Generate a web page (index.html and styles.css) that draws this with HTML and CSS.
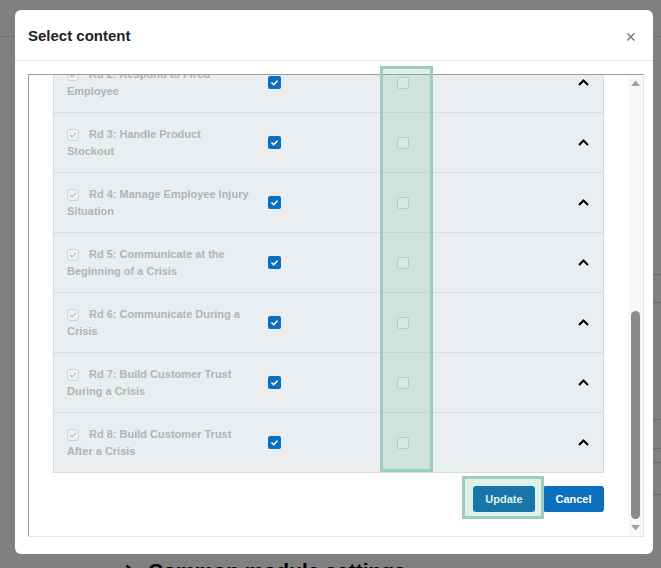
FILE: index.html
```html
<!DOCTYPE html>
<html lang="en">
<head>
  <meta charset="UTF-8">
  <meta name="viewport" content="width=device-width, initial-scale=1.0">
  <title>Select content</title>
  <link rel="stylesheet" href="styles.css">
</head>
<body>
  <div class="page">
    <div class="page-head"></div>
    <div class="page-main">
      <div class="page-content">
        <h2 class="section-title">
          <svg class="section-arrow" width="9" height="13" viewBox="0 0 9 13"><polyline points="1.5,1.5 7,6.5 1.5,11.5" fill="none" stroke="#000" stroke-width="2.4"/></svg>
          Common module settings
        </h2>
      </div>
      <div class="page-side">
        <div class="side-block side-a"></div>
        <div class="side-block side-b"></div>
        <div class="side-block side-c"></div>
      </div>
    </div>
  </div>

  <div class="modal">
    <div class="modal-header">
      <h3 class="modal-title">Select content</h3>
      <span class="modal-close">&times;</span>
    </div>
    <div class="modal-body">
      <div class="frame">
        <div class="frame-view">
          <div class="rounds">
            <div class="round">
              <div class="round-title"><span class="box box-disabled"><svg width="10" height="10" viewBox="0 0 10 10"><polyline points="2,5 4,7 8,3" fill="none" stroke="#bdbdbd" stroke-width="1.2"/></svg></span>Rd 2: Respond to Fired Employee</div>
              <span class="box box-on"><svg width="11" height="11" viewBox="0 0 11 11"><polyline points="2.5,5.5 4.7,7.7 8.5,3.8" fill="none" stroke="#fff" stroke-width="1.6"/></svg></span>
              <span class="box box-off"></span>
              <svg class="chevron" width="11" height="7" viewBox="0 0 11 7"><polyline points="1,6 5.5,1.5 10,6" fill="none" stroke="#000" stroke-width="2"/></svg>
            </div>
            <div class="round">
              <div class="round-title"><span class="box box-disabled"><svg width="10" height="10" viewBox="0 0 10 10"><polyline points="2,5 4,7 8,3" fill="none" stroke="#bdbdbd" stroke-width="1.2"/></svg></span>Rd 3: Handle Product Stockout</div>
              <span class="box box-on"><svg width="11" height="11" viewBox="0 0 11 11"><polyline points="2.5,5.5 4.7,7.7 8.5,3.8" fill="none" stroke="#fff" stroke-width="1.6"/></svg></span>
              <span class="box box-off"></span>
              <svg class="chevron" width="11" height="7" viewBox="0 0 11 7"><polyline points="1,6 5.5,1.5 10,6" fill="none" stroke="#000" stroke-width="2"/></svg>
            </div>
            <div class="round">
              <div class="round-title"><span class="box box-disabled"><svg width="10" height="10" viewBox="0 0 10 10"><polyline points="2,5 4,7 8,3" fill="none" stroke="#bdbdbd" stroke-width="1.2"/></svg></span>Rd 4: Manage Employee Injury Situation</div>
              <span class="box box-on"><svg width="11" height="11" viewBox="0 0 11 11"><polyline points="2.5,5.5 4.7,7.7 8.5,3.8" fill="none" stroke="#fff" stroke-width="1.6"/></svg></span>
              <span class="box box-off"></span>
              <svg class="chevron" width="11" height="7" viewBox="0 0 11 7"><polyline points="1,6 5.5,1.5 10,6" fill="none" stroke="#000" stroke-width="2"/></svg>
            </div>
            <div class="round">
              <div class="round-title"><span class="box box-disabled"><svg width="10" height="10" viewBox="0 0 10 10"><polyline points="2,5 4,7 8,3" fill="none" stroke="#bdbdbd" stroke-width="1.2"/></svg></span>Rd 5: Communicate at the Beginning of a Crisis</div>
              <span class="box box-on"><svg width="11" height="11" viewBox="0 0 11 11"><polyline points="2.5,5.5 4.7,7.7 8.5,3.8" fill="none" stroke="#fff" stroke-width="1.6"/></svg></span>
              <span class="box box-off"></span>
              <svg class="chevron" width="11" height="7" viewBox="0 0 11 7"><polyline points="1,6 5.5,1.5 10,6" fill="none" stroke="#000" stroke-width="2"/></svg>
            </div>
            <div class="round">
              <div class="round-title"><span class="box box-disabled"><svg width="10" height="10" viewBox="0 0 10 10"><polyline points="2,5 4,7 8,3" fill="none" stroke="#bdbdbd" stroke-width="1.2"/></svg></span>Rd 6: Communicate During a Crisis</div>
              <span class="box box-on"><svg width="11" height="11" viewBox="0 0 11 11"><polyline points="2.5,5.5 4.7,7.7 8.5,3.8" fill="none" stroke="#fff" stroke-width="1.6"/></svg></span>
              <span class="box box-off"></span>
              <svg class="chevron" width="11" height="7" viewBox="0 0 11 7"><polyline points="1,6 5.5,1.5 10,6" fill="none" stroke="#000" stroke-width="2"/></svg>
            </div>
            <div class="round">
              <div class="round-title"><span class="box box-disabled"><svg width="10" height="10" viewBox="0 0 10 10"><polyline points="2,5 4,7 8,3" fill="none" stroke="#bdbdbd" stroke-width="1.2"/></svg></span>Rd 7: Build Customer Trust During a Crisis</div>
              <span class="box box-on"><svg width="11" height="11" viewBox="0 0 11 11"><polyline points="2.5,5.5 4.7,7.7 8.5,3.8" fill="none" stroke="#fff" stroke-width="1.6"/></svg></span>
              <span class="box box-off"></span>
              <svg class="chevron" width="11" height="7" viewBox="0 0 11 7"><polyline points="1,6 5.5,1.5 10,6" fill="none" stroke="#000" stroke-width="2"/></svg>
            </div>
            <div class="round">
              <div class="round-title"><span class="box box-disabled"><svg width="10" height="10" viewBox="0 0 10 10"><polyline points="2,5 4,7 8,3" fill="none" stroke="#bdbdbd" stroke-width="1.2"/></svg></span>Rd 8: Build Customer Trust After a Crisis</div>
              <span class="box box-on"><svg width="11" height="11" viewBox="0 0 11 11"><polyline points="2.5,5.5 4.7,7.7 8.5,3.8" fill="none" stroke="#fff" stroke-width="1.6"/></svg></span>
              <span class="box box-off"></span>
              <svg class="chevron" width="11" height="7" viewBox="0 0 11 7"><polyline points="1,6 5.5,1.5 10,6" fill="none" stroke="#000" stroke-width="2"/></svg>
            </div>
          </div>
          <div class="actions">
            <button class="btn btn-update">Update</button>
            <button class="btn btn-cancel">Cancel</button>
          </div>
        </div>
        <div class="scrollbar">
          <div class="sb-btn"><svg width="9" height="6" viewBox="0 0 9 6"><polygon points="0,6 4.5,0.5 9,6" fill="#a3a3a3"/></svg></div>
          <div class="sb-track"><div class="sb-thumb"></div></div>
          <div class="sb-btn"><svg width="9" height="6" viewBox="0 0 9 6"><polygon points="0,0 9,0 4.5,5.5" fill="#a3a3a3"/></svg></div>
        </div>
      </div>
    </div>
    <div class="mark mark-column"></div>
    <div class="mark mark-update"></div>
  </div>
</body>
</html>
```

FILE: styles.css
```css
html, body {
  margin: 0;
  padding: 0;
  height: 568px;
  overflow: hidden;
}
body {
  font-family: "Liberation Sans", Arial, sans-serif;
  background: #808080;
}

/* page behind the dialog (dimmed) */
.page-head {
  height: 36px;
  border-bottom: 1px solid #727272;
}
.page-main {
  display: flex;
}
.page-content {
  flex: 1;
  padding-left: 125px;
}
.section-title {
  margin: 523px 0 0;
  font-size: 21px;
  line-height: 21px;
  font-weight: bold;
  color: #000;
  display: flex;
  align-items: center;
  gap: 14px;
}
.page-side {
  width: 30px;
}
.side-block {
  border-top: 1px solid #6c6c6c;
  border-bottom: 1px solid #6c6c6c;
}
.side-a {
  margin-top: 237px;
  height: 27px;
}
.side-b {
  margin-top: 116px;
  height: 28px;
}
.side-c {
  margin-top: 13px;
  height: 31px;
}

/* dialog */
.modal {
  position: absolute;
  top: 10px;
  left: 15px;
  width: 638px;
  height: 544px;
  background: #fff;
  border-radius: 6px;
  overflow: hidden;
}
.modal-header {
  height: 50px;
  border-bottom: 1px solid #e4e6e8;
  display: flex;
  align-items: center;
  justify-content: space-between;
  padding: 0 17px 0 13px;
}
.modal-title {
  margin: 0;
  font-size: 15px;
  font-weight: bold;
  color: #1f1f1f;
}
.modal-close {
  font-size: 18px;
  color: #777;
  margin-top: 4px;
}
.modal-body {
  padding: 13px 9px 0 13px;
}
.frame {
  display: flex;
  height: 463px;
  box-sizing: border-box;
  border-top: 1px solid #9b9b9b;
  border-left: 1px solid #9b9b9b;
  border-right: 1px solid #e6e6e6;
  border-bottom: 1px solid #e6e6e6;
}
.frame-view {
  flex: 1;
  overflow: hidden;
  padding-left: 24px;
}
.rounds {
  width: 551px;
  box-sizing: border-box;
  margin-top: -23px;
  border-left: 1px solid #d9dcdf;
  border-right: 1px solid #d9dcdf;
  border-bottom: 1px solid #d9dcdf;
}
.round {
  display: flex;
  align-items: center;
  height: 59px;
  border-top: 1px solid #d9dcdf;
  background: #ebeef1;
  padding: 0 14px 0 13px;
}
.round-title {
  width: 183px;
  font-size: 11px;
  font-weight: bold;
  line-height: 17px;
  color: #b3b3b3;
}
.box {
  display: inline-flex;
  align-items: center;
  justify-content: center;
  box-sizing: border-box;
}
.box-disabled {
  width: 12px;
  height: 12px;
  margin-right: 10px;
  vertical-align: -2px;
  border: 1px solid #cfd1d3;
  border-radius: 3px;
  background: #eef0f2;
}
.box-on {
  width: 13px;
  height: 13px;
  margin-left: 18px;
  border-radius: 2px;
  background: #0b6fc0;
}
.box-off {
  width: 12px;
  height: 12px;
  margin-left: 116px;
  border: 1px solid #cdd3d6;
  border-radius: 2px;
  background: #f6f7f8;
}
.chevron {
  margin-left: auto;
}
.actions {
  width: 551px;
  display: flex;
  justify-content: flex-end;
  gap: 8px;
  margin-top: 13px;
}
.btn {
  height: 26px;
  padding: 0 12px;
  border: none;
  border-radius: 3px;
  background: #0b6fc0;
  color: #fff;
  font-family: "Liberation Sans", Arial, sans-serif;
  font-size: 11px;
  font-weight: bold;
}
.btn-update {
  width: 62px;
  padding: 0;
  background: #0564ad;
}
.btn-cancel {
  width: 61px;
  padding: 0;
}
.scrollbar {
  width: 15px;
  background: #f9f9f9;
  display: flex;
  flex-direction: column;
}
.sb-btn {
  height: 16px;
  display: flex;
  align-items: center;
  justify-content: center;
}
.sb-track {
  flex: 1;
  display: flex;
  justify-content: center;
}
.sb-thumb {
  width: 9px;
  height: 208px;
  margin-top: 220px;
  border-radius: 5px;
  background: #8b8b8b;
}

/* green highlight marks drawn over the dialog */
.mark {
  position: absolute;
  box-sizing: border-box;
  border: 3px solid #9dcebd;
  background: rgba(98, 184, 150, 0.21);
}
.mark-column {
  left: 365px;
  top: 56px;
  width: 53px;
  height: 406px;
}
.mark-update {
  left: 447px;
  top: 466px;
  width: 82px;
  height: 43px;
}
```
